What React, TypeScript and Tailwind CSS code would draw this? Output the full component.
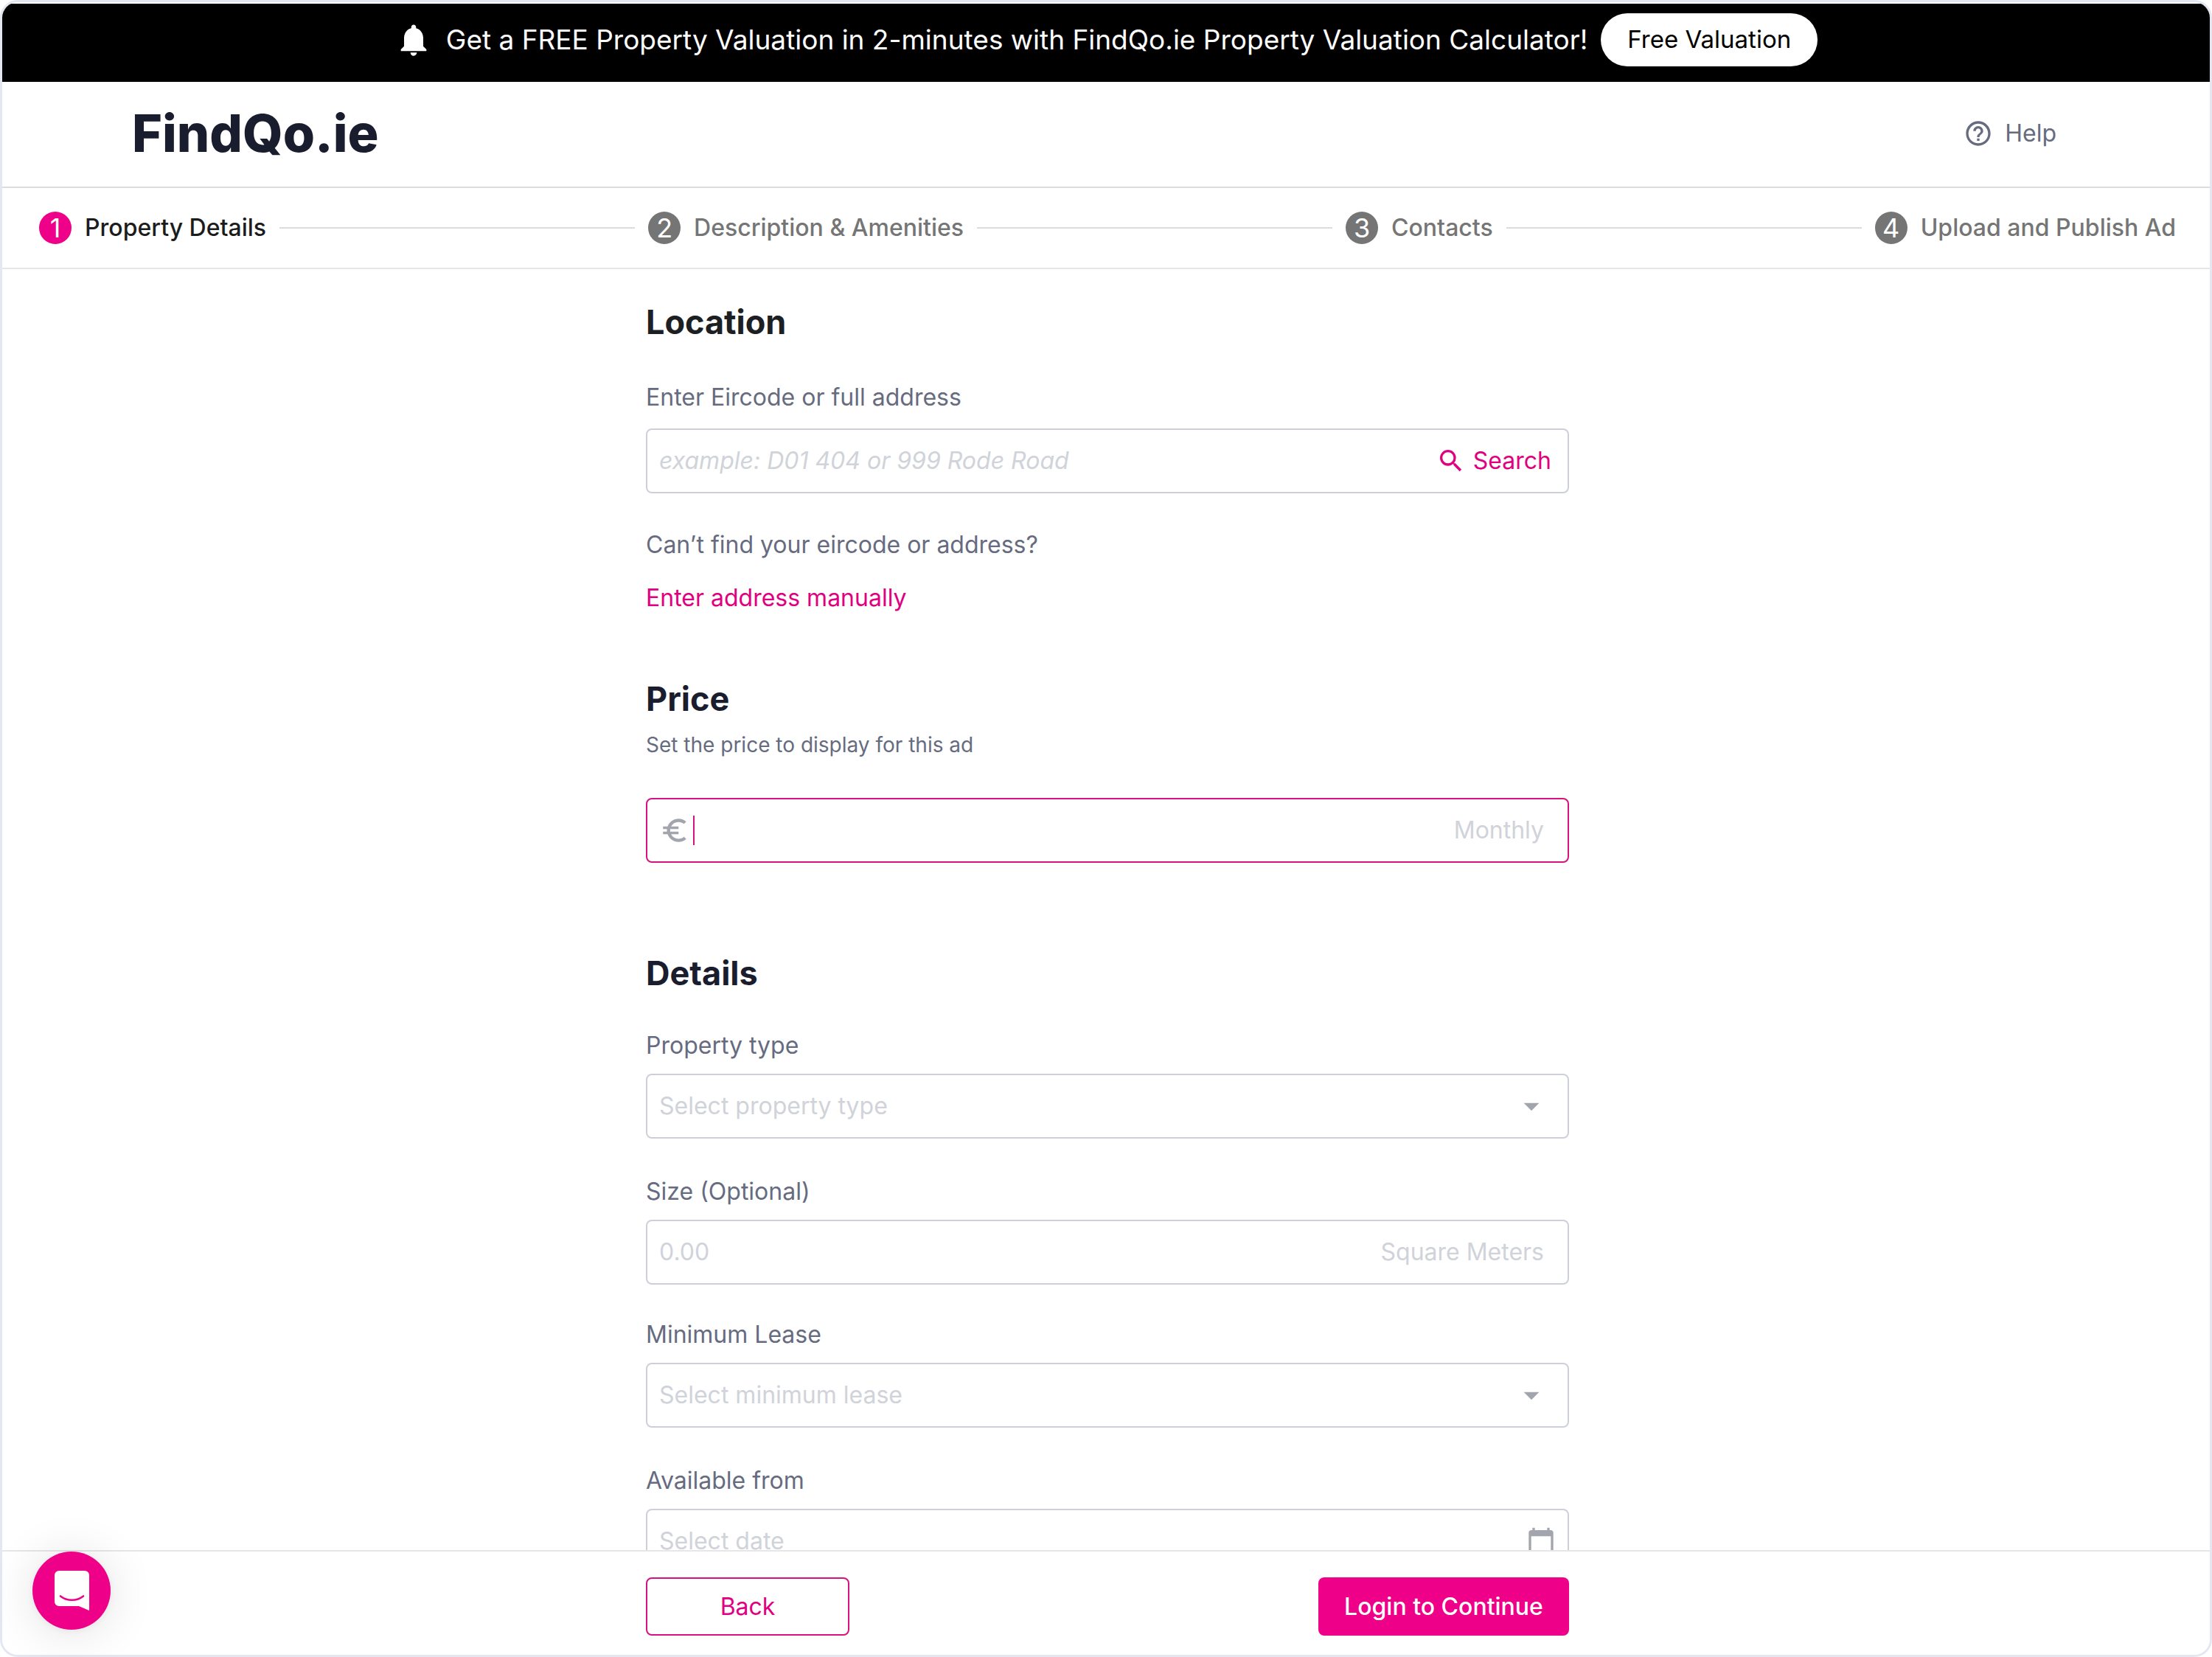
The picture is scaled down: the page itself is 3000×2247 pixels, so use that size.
import { type ReactNode } from "react";
import {
  MdArrowDropDown,
  MdCalendarToday,
  MdEuroSymbol,
  MdHelpOutline,
  MdNotifications,
  MdSearch,
} from "react-icons/md";
import clsx from "clsx";

const steps = ["Property Details", "Description & Amenities", "Contacts", "Upload and Publish Ad"];

function Banner() {
  return (
    <div className="flex items-center justify-center bg-black pt-[13px] pb-[21px] text-white">
      <MdNotifications className="h-[52px] w-[52px] shrink-0" />
      <p className="ml-[18px] text-[37px] leading-[48px]">
        Get a FREE Property Valuation in 2-minutes with FindQo.ie Property Valuation Calculator!
      </p>
      <button type="button" className="ml-[18px] h-[72px] rounded-full bg-white px-9 text-[33px] text-black">
        Free Valuation
      </button>
    </div>
  );
}

function Header() {
  return (
    <header className="flex h-[144px] items-center justify-between border-b-2 border-[#dcdcdc] pr-[208px] pb-[2px] pl-[176px]">
      <a href="#" className="text-[70px] leading-[80px] font-extrabold text-[#1a1d2d]">
        FindQo.ie
      </a>
      <a href="#" className="flex items-center gap-4 text-[32px] text-[#666b80]">
        <MdHelpOutline className="h-10 w-10" />
        Help
      </a>
    </header>
  );
}

function Stepper({ active }: { active: number }) {
  return (
    <ol className="flex h-[110px] items-center gap-[18px] border-b-2 border-[#e6e6e6] pr-[46px] pl-[50px]">
      {steps.map((label, i) => (
        <li key={label} className={clsx("flex items-center gap-[18px]", i > 0 && "flex-auto")}>
          {i > 0 && <span className="h-[2px] flex-1 bg-[#dcdcdc]" />}
          <span
            className={clsx(
              "flex h-11 w-11 shrink-0 items-center justify-center rounded-full text-[36px] leading-[44px] text-white",
              i === active ? "bg-[#ee0089]" : "bg-[#757575]"
            )}
          >
            {i + 1}
          </span>
          <span className={clsx("text-[32px] font-medium", i === active ? "text-[#1c1c1c]" : "text-[#757575]")}>
            {label}
          </span>
        </li>
      ))}
    </ol>
  );
}

interface FieldProps {
  id: string;
  label: string;
  className?: string;
  children: ReactNode;
}

function Field({ id, label, className, children }: FieldProps) {
  return (
    <div className={clsx("flex flex-col gap-4", className)}>
      <label htmlFor={id} className="text-[32px] leading-[44px] text-[#666b80]">
        {label}
      </label>
      {children}
    </div>
  );
}

function InputBox({ focused = false, children }: { focused?: boolean; children: ReactNode }) {
  return (
    <div
      className={clsx(
        "flex h-[88px] items-center rounded-lg border-2 px-4 text-[32px]",
        focused ? "border-[#d6127f]" : "border-[#cdd0d8]"
      )}
    >
      {children}
    </div>
  );
}

function SelectBox({ id, placeholder, options }: { id: string; placeholder: string; options: string[] }) {
  return (
    <div className="relative">
      <select
        id={id}
        defaultValue=""
        className="h-[88px] w-full appearance-none rounded-lg border-2 border-[#cdd0d8] bg-white px-4 text-[32px] text-[#d0d3d9] outline-none"
      >
        <option value="">{placeholder}</option>
        {options.map((option) => (
          <option key={option}>{option}</option>
        ))}
      </select>
      <MdArrowDropDown className="pointer-events-none absolute top-[19px] right-[26px] h-[50px] w-[50px] text-[#a3a5ae]" />
    </div>
  );
}

const inputClass = "min-w-0 flex-1 bg-transparent outline-none placeholder:text-[#d0d3d9]";

function PropertyForm() {
  return (
    <form className="mx-auto w-full max-w-[1252px] pt-11">
      <h2 className="text-[45px] leading-[56px] font-bold text-[#1d2023]">Location</h2>
      <div className="mt-[52px] flex flex-col gap-5">
        <label htmlFor="address" className="text-[32px] leading-[44px] text-[#666b80]">
          Enter Eircode or full address
        </label>
        <InputBox>
          <input
            id="address"
            type="text"
            placeholder="example: D01 404 or 999 Rode Road"
            className={clsx(inputClass, "placeholder:italic")}
          />
          <button type="button" className="flex items-center gap-2.5 pr-1.5 text-[#e00080]">
            <MdSearch className="h-10 w-10" />
            Search
          </button>
        </InputBox>
      </div>
      <p className="mt-12 text-[32px] leading-[44px] text-[#666b80]">Can’t find your eircode or address?</p>
      <a href="#" className="mt-7 inline-block text-[32px] leading-[44px] text-[#e00080]">
        Enter address manually
      </a>

      <h2 className="mt-[87px] text-[45px] leading-[56px] font-bold text-[#1a1d2d]">Price</h2>
      <label htmlFor="price" className="mt-3 mb-[50px] block text-[28px] leading-[44px] text-[#666b80]">
        Set the price to display for this ad
      </label>
      <InputBox focused>
        <MdEuroSymbol className="h-[42px] w-[42px] text-[#a3a5ae]" />
        <span className="ml-1 h-10 w-[2px] bg-[#d6127f]" />
        <input id="price" type="text" className={inputClass} />
        <span className="pr-4 text-[#d0d3d9]">Monthly</span>
      </InputBox>

      <h2 className="mt-[122px] text-[45px] leading-[56px] font-bold text-[#1a1d2d]">Details</h2>
      <Field id="type" label="Property type" className="mt-12">
        <SelectBox id="type" placeholder="Select property type" options={["Apartment", "House", "Studio"]} />
      </Field>
      <Field id="size" label="Size (Optional)" className="mt-[50px]">
        <InputBox>
          <input id="size" type="text" placeholder="0.00" className={inputClass} />
          <span className="pr-4 text-[#d0d3d9]">Square Meters</span>
        </InputBox>
      </Field>
      <Field id="lease" label="Minimum Lease" className="mt-[46px]">
        <SelectBox id="lease" placeholder="Select minimum lease" options={["6 months", "1 year", "2 years"]} />
      </Field>
      <Field id="date" label="Available from" className="mt-[50px]">
        <InputBox>
          <input id="date" type="text" placeholder="Select date" className={inputClass} />
          <MdCalendarToday className="h-10 w-10 text-[#a3a5ae]" />
        </InputBox>
      </Field>
    </form>
  );
}

function Footer() {
  return (
    <footer className="shrink-0 border-t-2 border-[#e6e6e6] bg-white pt-[35px] pb-[26px] pl-1">
      <div className="mx-auto flex w-full max-w-[1252px] justify-between text-[32px]">
        <button type="button" className="h-[79px] w-[276px] rounded-lg border-2 border-[#d6127f] text-[#e00080]">
          Back
        </button>
        <button type="button" className="h-[79px] w-[340px] rounded-lg bg-[#ee0089] font-medium text-white">
          Login to Continue
        </button>
      </div>
    </footer>
  );
}

function ChatButton() {
  return (
    <button
      type="button"
      aria-label="Open chat"
      className="fixed bottom-[37px] left-11 flex h-[106px] w-[106px] items-center justify-center rounded-full bg-[#ee0089] shadow-[0_4px_64px_rgba(0,0,0,0.12),0_2px_12px_rgba(0,0,0,0.06)]"
    >
      <svg viewBox="0 0 47 54" className="h-[54px] w-[47px]">
        <path fill="#fff" d="M6 0h35a6 6 0 0 1 6 6v48l-14-6H6a6 6 0 0 1-6-6V6a6 6 0 0 1 6-6z" />
        <path d="M8 34.5c9 7 22 7 31 0" fill="none" stroke="#ee0089" strokeWidth="2.6" strokeLinecap="round" />
      </svg>
    </button>
  );
}

export default function App() {
  return (
    <div className="flex h-screen flex-col overflow-hidden rounded-[24px] border-[3px] border-[#e4e7f2] bg-white pt-[2px] font-['Inter',sans-serif]">
      <div className="shrink-0">
        <Banner />
        <Header />
        <Stepper active={0} />
      </div>
      <main className="min-h-0 flex-1 overflow-hidden pl-1">
        <PropertyForm />
      </main>
      <Footer />
      <ChatButton />
    </div>
  );
}
